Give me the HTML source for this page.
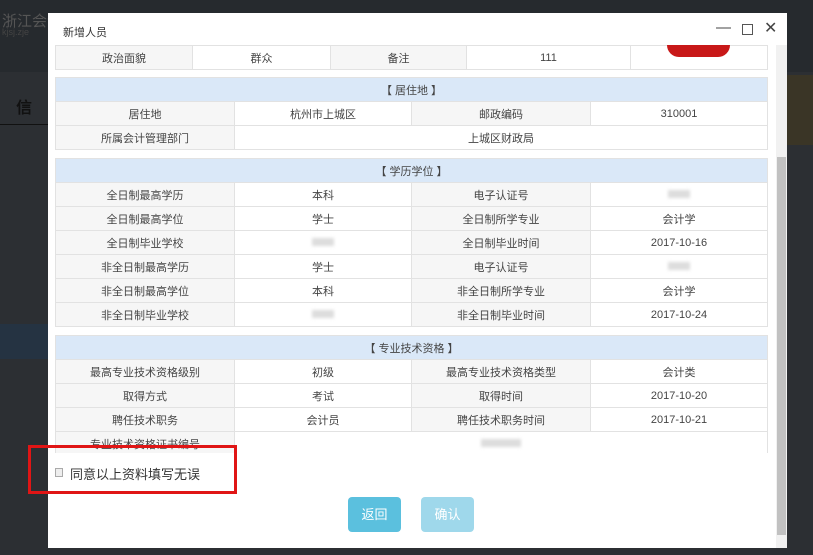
<!DOCTYPE html><html><head><meta charset="utf-8"><style>
*{margin:0;padding:0;box-sizing:border-box}
body{width:813px;height:555px;overflow:hidden;background:#2c2f33;font-family:"Liberation Sans","Noto Sans CJK SC",sans-serif;position:relative;font-size:11px;color:#333}
.bg{position:absolute;color:#000}
.modal{position:absolute;left:48px;top:13px;width:739px;height:535px;background:#fff}
.title{position:absolute;left:15px;top:11px;font-size:11px;color:#333}
table{position:absolute;left:7px;width:713px;border-collapse:collapse;table-layout:fixed}
td{border:1px solid #e2e2e2;height:24px;text-align:center;font-size:11px;color:#444;padding:0}
td.l{background:#f6f6f6}
td.h{background:#dae8f8}
.blur{display:inline-block;width:22px;height:8px;background:#ddd;filter:blur(1.5px)}
.sb{position:absolute;left:728px;top:32px;width:11px;height:503px;background:#f1f1f1}
.th{position:absolute;left:729px;top:144px;width:9px;height:378px;background:#c1c1c1}
.btn{position:absolute;top:484px;width:53px;height:35px;border-radius:4px;color:#fff;font-size:13px;text-align:center;line-height:35px}
</style></head><body>
<div class="bg" style="left:0;top:0;width:813px;height:72px;background:#262a2e"></div>
<div class="bg" style="left:2px;top:10px;color:#555;font-size:15px">浙江会计</div>
<div class="bg" style="left:2px;top:27px;color:#444;font-size:9px">kjsj.zje</div>
<div class="bg" style="left:0;top:85px;width:48px;height:40px;border-bottom:1px solid #111"></div>
<div class="bg" style="left:16px;top:94px;color:#111;font-size:16px;font-weight:bold">信</div>
<div class="bg" style="left:0;top:324px;width:48px;height:35px;background:#253342"></div>
<div class="bg" style="left:787px;top:75px;width:26px;height:70px;background:#3a3526"></div>
<div class="modal">
<div class="title">新增人员</div>
<div style="position:absolute;left:668px;top:6px;font-size:15px;color:#444">—</div>
<div style="position:absolute;left:694px;top:11px;width:11px;height:11px;border:1px solid #555"></div>
<div style="position:absolute;left:716px;top:5px;font-size:16px;color:#444">✕</div>
<table style="top:32px"><colgroup><col style="width:137px"><col style="width:138px"><col style="width:136px"><col style="width:164px"><col></colgroup>
<tr><td class="l" style="height:23px">政治面貌</td><td>群众</td><td class="l">备注</td><td>111</td><td style="position:relative"><div style="position:absolute;left:36px;top:-1px;width:63px;height:12px;background:#c81818;border-radius:0 0 20px 20px"></div></td></tr></table>
<table style="top:64px"><colgroup><col style="width:179px"><col style="width:177px"><col style="width:179px"><col></colgroup>
<tr><td class="h" colspan="4">【 居住地 】</td></tr>
<tr><td class="l">居住地</td><td>杭州市上城区</td><td class="l">邮政编码</td><td>310001</td></tr>
<tr><td class="l">所属会计管理部门</td><td colspan="3">上城区财政局</td></tr></table>
<table style="top:145px"><colgroup><col style="width:179px"><col style="width:177px"><col style="width:179px"><col></colgroup>
<tr><td class="h" colspan="4">【 学历学位 】</td></tr>
<tr><td class="l">全日制最高学历</td><td>本科</td><td class="l">电子认证号</td><td><span class="blur"></span></td></tr>
<tr><td class="l">全日制最高学位</td><td>学士</td><td class="l">全日制所学专业</td><td>会计学</td></tr>
<tr><td class="l">全日制毕业学校</td><td><span class="blur"></span></td><td class="l">全日制毕业时间</td><td>2017-10-16</td></tr>
<tr><td class="l">非全日制最高学历</td><td>学士</td><td class="l">电子认证号</td><td><span class="blur"></span></td></tr>
<tr><td class="l">非全日制最高学位</td><td>本科</td><td class="l">非全日制所学专业</td><td>会计学</td></tr>
<tr><td class="l">非全日制毕业学校</td><td><span class="blur"></span></td><td class="l">非全日制毕业时间</td><td>2017-10-24</td></tr></table>
<table style="top:322px"><colgroup><col style="width:179px"><col style="width:177px"><col style="width:179px"><col></colgroup>
<tr><td class="h" colspan="4">【 专业技术资格 】</td></tr>
<tr><td class="l">最高专业技术资格级别</td><td>初级</td><td class="l">最高专业技术资格类型</td><td>会计类</td></tr>
<tr><td class="l">取得方式</td><td>考试</td><td class="l">取得时间</td><td>2017-10-20</td></tr>
<tr><td class="l">聘任技术职务</td><td>会计员</td><td class="l">聘任技术职务时间</td><td>2017-10-21</td></tr>
<tr><td class="l">专业技术资格证书编号</td><td colspan="3"><span class="blur" style="width:40px"></span></td></tr></table>
<div style="position:absolute;left:0;top:440px;width:728px;height:95px;background:#fff"></div>
<div style="position:absolute;left:-20px;top:432px;width:209px;height:49px;border:3px solid #e01515"></div>
<div style="position:absolute;left:7px;top:455px;width:8px;height:9px;border:1px solid #aaa;background:#eee"></div>
<div style="position:absolute;left:22px;top:451px;font-size:13px;color:#333">同意以上资料填写无误</div>
<div class="btn" style="left:300px;background:#5bc0de">返回</div>
<div class="btn" style="left:373px;background:#9fd8eb">确认</div>
<div class="sb"></div><div class="th"></div>
</div>
</body></html>
